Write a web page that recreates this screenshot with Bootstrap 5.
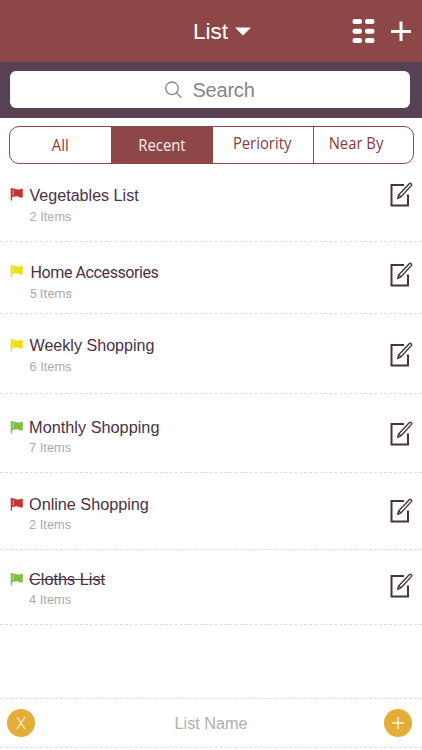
<!DOCTYPE html>
<html lang="en">
<head>
<meta charset="utf-8">
<meta name="viewport" content="width=device-width, initial-scale=1">
<title>List</title>
<link href="https://cdn.jsdelivr.net/npm/bootstrap@5.3.0/dist/css/bootstrap.min.css" rel="stylesheet">
<style>
body{font-family:"Liberation Sans",Arial,sans-serif;background:#fff;color:#4b3144;height:750px;overflow:hidden}
svg{display:block;flex:none}
.top-bar{height:62px;background:#8e4747;color:#fff;padding:0 11px 0 193px}
.top-title{font-size:22.5px;line-height:26px;padding-top:1px}
.caret{margin-left:7px}
.search-bar{height:56px;background:#584153;padding:9px 12px 10px 10px}
.search-box{background:#fff;border-radius:6px;height:37px;color:#85858a;font-size:20px;letter-spacing:-.2px;padding-top:1px}
.search-text{margin-left:9px}
.tabs{margin:8px 8px 0 9px;height:38px;border:1.5px solid #8e4747;border-radius:10px;overflow:hidden;font-family:"Open Sans","Noto Sans",sans-serif;font-size:16.3px;color:#843b3c}
.tab-item{width:101px;flex:none;line-height:20px}
.tab-item span{display:inline-block;transform:scaleX(.91)}
.tab-item+.tab-item{border-left:1.5px solid #8e4747}
.tab-item.active{background:#8e4747;color:#fbeeee}
.tab-low{padding-top:7.5px}
.tab-high{padding-top:6px;padding-right:2px}
.row-item{border-bottom:1px dashed #dcdcdc;padding-left:10px;padding-right:9px}
.row-title{font-size:16.1px;line-height:20px;margin-top:-1px;white-space:nowrap}
.row-count{font-size:12.8px;line-height:16px;margin-top:4px;color:#aaa}
.row-body{margin-left:5.5px}
.rounded-face .row-title{font-family:Roboto,sans-serif;letter-spacing:-.45px;padding-left:1px;margin-top:0}
.rounded-face .row-count{font-family:Roboto,sans-serif;letter-spacing:0;margin-top:3px}
.r1{height:78px}.r1 .row-left{padding-top:22px}.r1 .row-edit{padding-top:18px}
.r2{height:72px}.r2 .row-left{padding-top:21px}.r2 .row-edit{padding-top:20px}
.r3{height:80px}.r3 .row-left{padding-top:22px}.r3 .row-edit{padding-top:28px}
.r4{height:79px}.r4 .row-left{padding-top:24px}.r4 .row-edit{padding-top:27px}
.r5{height:77px}.r5 .row-left{padding-top:22px}.r5 .row-edit{padding-top:25px}
.r6{height:75px}.r6 .row-left{padding-top:20px}.r6 .row-edit{padding-top:23px}
.r4 .row-count,.r5 .row-count,.r6 .row-count{margin-top:3px}
.r4 .row-title,.r5 .row-title,.r6 .row-title{font-size:16.3px}
.r5 .row-title{letter-spacing:-.05px}
.r4 .row-left,.r5 .row-left,.r6 .row-left{margin-left:-.4px}
.flag{margin-top:2px}
.r1 .flag,.r2 .flag{margin-top:1px}
.footer-bar{margin-top:73px;height:50px;border-top:1px dashed #dcdcdc;border-bottom:1px dashed #dcdcdc;padding:0 10px 0 7px;color:#b0b0b0;font-size:16.2px}
.footer-text{padding-left:3px}
.round-btn{width:28px;height:28px;background:#e4ad38;border-radius:50%;flex:none}
</style>
<script src="https://cdn.jsdelivr.net/npm/bootstrap@5.3.0/dist/js/bootstrap.bundle.min.js"></script>
</head>
<body>
<svg width="0" height="0" class="position-absolute" aria-hidden="true">
  <symbol id="flag" viewBox="0 0 14 14"><path fill="currentColor" d="M.7 1H2v12.500H.7z"/><path fill="currentColor" d="M1.500 1.500C4 .6 5 2.600 7.600 2.600c2 0 3.200-1.200 5.200-.8v8.500c-2 .7-3.300-.3-5.200-.8C5 8.900 4 10.300 1.500 10.300z"/><path d="M3.200 2.800v5.700" stroke="#fff" stroke-opacity=".65" stroke-width=".8"/></symbol>
  <symbol id="edit" viewBox="0 0 23 26"><path d="M14 3H1.500v20.500h16.500V12.500" fill="none" stroke="currentColor" stroke-width="2"/><path d="M7.700 16.500l.9-3.600L19.500 1.500c.8-.8 2.800.8 2 1.900L11 14.800zM9 13.200l1.800 1.600" fill="#fff" stroke="currentColor" stroke-width="1.400" stroke-linejoin="round"/></symbol>
</svg>

<header class="top-bar d-flex align-items-center">
  <span class="top-title">List</span>
  <svg class="caret" width="16" height="9" viewBox="0 0 16 9"><path d="M0 .5h16L8 8.500z" fill="#fff"/></svg>
  <svg class="ms-auto" width="23" height="26" viewBox="0 0 23 26" fill="#fff"><rect x=".5" y="1" width="9.500" height="5" rx="2.300"/><rect x="13" y="1" width="9.500" height="5" rx="2.300"/><rect x=".5" y="10.700" width="9.500" height="5" rx="2.300"/><rect x="13" y="10.700" width="9.500" height="5" rx="2.300"/><rect x=".5" y="20" width="9.500" height="5" rx="2.300"/><rect x="13" y="20" width="9.500" height="5" rx="2.300"/></svg>
  <svg class="ms-3" width="20" height="20" viewBox="0 0 20 20"><path d="M0 10.500h20M10 .5v19.500" stroke="#fff" stroke-width="3"/></svg>
</header>

<div class="search-bar">
  <div class="search-box d-flex align-items-center justify-content-center">
    <svg width="18" height="18" viewBox="0 0 18 18" fill="none" stroke="#85858a" stroke-width="1.300"><circle cx="7" cy="7.300" r="6.300"/><path d="M11.500 11.800l5 5"/></svg>
    <span class="search-text">Search</span>
  </div>
</div>

<nav class="tabs d-flex">
  <div class="tab-item text-center tab-low"><span>All</span></div>
  <div class="tab-item text-center tab-low active"><span>Recent</span></div>
  <div class="tab-item text-center tab-high"><span>Periority</span></div>
  <div class="tab-item text-center tab-high pe-3"><span>Near By</span></div>
</nav>

<main class="list-rows">
  <div class="row-item r1 d-flex"><div class="row-left d-flex"><svg class="flag" width="14" height="14" color="#c43434"><use href="#flag"/></svg><div class="row-body"><div class="row-title">Vegetables List</div><div class="row-count">2 Items</div></div></div><div class="row-edit ms-auto"><svg width="23" height="26"><use href="#edit"/></svg></div></div>
  <div class="row-item rounded-face r2 d-flex"><div class="row-left d-flex"><svg class="flag" width="14" height="14" color="#ecdf18"><use href="#flag"/></svg><div class="row-body"><div class="row-title">Home Accessories</div><div class="row-count">5 Items</div></div></div><div class="row-edit ms-auto"><svg width="23" height="26"><use href="#edit"/></svg></div></div>
  <div class="row-item r3 d-flex"><div class="row-left d-flex"><svg class="flag" width="14" height="14" color="#f0dc12"><use href="#flag"/></svg><div class="row-body"><div class="row-title">Weekly Shopping</div><div class="row-count">6 Items</div></div></div><div class="row-edit ms-auto"><svg width="23" height="26"><use href="#edit"/></svg></div></div>
  <div class="row-item r4 d-flex"><div class="row-left d-flex"><svg class="flag" width="14" height="14" color="#7fbf3f"><use href="#flag"/></svg><div class="row-body"><div class="row-title">Monthly Shopping</div><div class="row-count">7 Items</div></div></div><div class="row-edit ms-auto"><svg width="23" height="26"><use href="#edit"/></svg></div></div>
  <div class="row-item r5 d-flex"><div class="row-left d-flex"><svg class="flag" width="14" height="14" color="#c43434"><use href="#flag"/></svg><div class="row-body"><div class="row-title">Online Shopping</div><div class="row-count">2 Items</div></div></div><div class="row-edit ms-auto"><svg width="23" height="26"><use href="#edit"/></svg></div></div>
  <div class="row-item r6 d-flex"><div class="row-left d-flex"><svg class="flag" width="14" height="14" color="#7fbf3f"><use href="#flag"/></svg><div class="row-body"><div class="row-title text-decoration-line-through">Cloths List</div><div class="row-count">4 Items</div></div></div><div class="row-edit ms-auto"><svg width="23" height="26"><use href="#edit"/></svg></div></div>
</main>

<footer class="footer-bar d-flex align-items-center justify-content-between">
  <div class="round-btn d-flex align-items-center justify-content-center"><svg width="12" height="14" viewBox="0 0 12 14"><path d="M2 1l8 12M10 1L2 13" stroke="#fff6dd" stroke-width="1.200"/></svg></div>
  <span class="footer-text">List Name</span>
  <div class="round-btn d-flex align-items-center justify-content-center"><svg width="14" height="14" viewBox="0 0 14 14"><path d="M1 7h12M7 1v12" stroke="#fff6dd" stroke-width="1.400"/></svg></div>
</footer>
</body>
</html>
